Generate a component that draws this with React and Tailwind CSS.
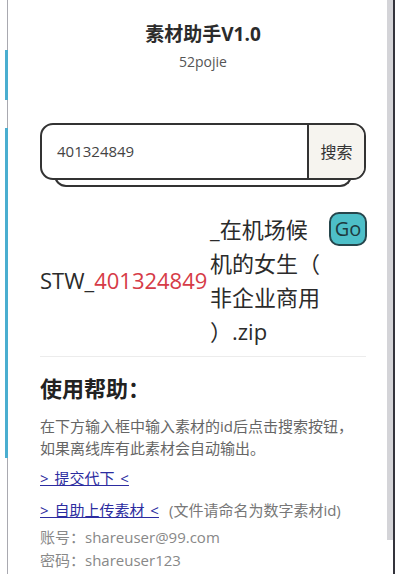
export default function App() {
  const font = { fontFamily: '"Open Sans", "Noto Sans CJK SC", sans-serif' };
  return (
    <div className="w-[400px] h-[574px] bg-white flex overflow-hidden" style={font}>
      {/* left window edge */}
      <div className="w-[9px] flex flex-col items-end pr-[1px]">
        <div className="w-[1px] h-[50px] bg-[#a9a9b0]" />
        <div className="w-[3px] h-[50px] bg-[#4aaed0]" />
        <div className="w-[1px] h-[28px] bg-[#a9a9b0]" />
        <div className="w-[3px] h-[330px] bg-[#4aaed0]" />
        <div className="w-[1px] flex-1 bg-[#a9a9b0]" />
      </div>

      {/* main content */}
      <div className="flex-1 pl-[31px] pr-[21px] flex flex-col text-[#333]">
        <div className="pt-[20px] text-center text-[19px] leading-[28px] font-bold text-[#2b2b2b]">素材助手V1.0</div>
        <div className="mt-[3px] text-center text-[14px] leading-[21px] text-[#555]">52pojie</div>

        {/* search box */}
        <div className="mt-[51px] relative z-10 h-[57px] flex border-2 border-[#333] rounded-[13px] bg-white overflow-hidden">
          <div className="flex-1 flex items-center pl-[15px] text-[15px] text-[#444]">401324849</div>
          <div className="w-[57px] flex items-center justify-center border-l-2 border-[#333] bg-[#f6f4ef] text-[16px] text-[#333]">搜索</div>
        </div>
        <div className="-mt-[14px] mx-[14px] h-[21px] border-2 border-t-0 border-[#333] rounded-b-[12px]" />

        {/* result */}
        <div className="mt-[25px] flex items-center text-[22px] leading-[34px] text-[#2b2b2b]">
          <div className="w-[170px] whitespace-nowrap">
            STW_<span className="text-[#d63b47]">401324849</span>
          </div>
          <div className="w-[118px] whitespace-nowrap">
            _在机场候<br />机的女生（<br />非企业商用<br />）.zip
          </div>
          <div className="self-start ml-auto mr-[-1px] w-[38px] h-[34px] flex items-center justify-center rounded-[10px] border-2 border-[#26464c] bg-[#4dbfc8] text-[20px] leading-none text-[#1e3a40]">Go</div>
        </div>

        <div className="mt-[8px] h-[1px] bg-[#ececec]" />

        {/* help */}
        <div className="mt-[16px] text-[22px] leading-[30px] font-bold text-[#222]">使用帮助：</div>
        <p className="mt-[12px] text-[15px] leading-[22px] text-[#666]">
          在下方输入框中输入素材的id后点击搜索按钮，<br />如果离线库有此素材会自动输出。
        </p>
        <p className="mt-[8px] text-[15px] leading-[22px] [word-spacing:2px]">
          <span className="text-[#2c2ca0] underline">&gt; 提交代下 &lt;</span>
        </p>
        <p className="mt-[10px] text-[15px] leading-[22px] text-[#777] whitespace-nowrap">
          <span className="text-[#2c2ca0] underline [word-spacing:2px]">&gt; 自助上传素材 &lt;</span>
          <span className="ml-[10px]">(文件请命名为数字素材id)</span>
        </p>
        <p className="mt-[5px] text-[15px] leading-[23px] text-[#888]">账号：shareuser@99.com</p>
        <p className="text-[15px] leading-[23px] text-[#888]">密码：shareuser123</p>
      </div>

      {/* right window edge */}
      <div className="w-[13px] flex">
        <div className="w-[6px] flex flex-col">
          <div className="h-[540px] bg-[#d4d4d8]" />
        </div>
        <div className="w-[2px] bg-[#34343c]" />
      </div>
    </div>
  );
}
